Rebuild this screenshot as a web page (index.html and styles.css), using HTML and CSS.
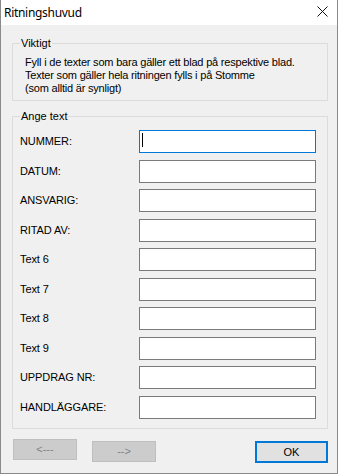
FILE: index.html
```html
<!DOCTYPE html>
<html lang="sv">
<head>
  <meta charset="UTF-8">
  <title>Ritningshuvud</title>
  <link rel="stylesheet" href="styles.css">
</head>
<body>

  <div class="window">
    <div class="titlebar">
      <span class="title">Ritningshuvud</span>
      <svg class="close-icon" width="11" height="11" viewBox="0 0 11 11">
        <path d="M0.5 0.5L10.5 10.5M10.5 0.5L0.5 10.5" stroke="#111" stroke-width="1"/>
      </svg>
    </div>

    <div class="dialog-body">
      <fieldset class="group-box">
        <legend>Viktigt</legend>
        <p class="info-text">
          Fyll i de texter som bara gäller ett blad på respektive blad.<br>
          Texter som gäller hela ritningen fylls i på Stomme<br>
          (som alltid är synligt)
        </p>
      </fieldset>

      <fieldset class="group-box fields-box">
        <legend>Ange text</legend>
        <div class="form-grid">
          <label for="nummer">NUMMER:</label>
          <div class="field-wrap">
            <input type="text" id="nummer" class="input-box focused">
            <span class="caret"></span>
          </div>

          <label for="datum">DATUM:</label>
          <input type="text" id="datum" class="input-box">

          <label for="ansvarig">ANSVARIG:</label>
          <input type="text" id="ansvarig" class="input-box">

          <label for="ritadav">RITAD AV:</label>
          <input type="text" id="ritadav" class="input-box">

          <label for="text6">Text 6</label>
          <input type="text" id="text6" class="input-box">

          <label for="text7">Text 7</label>
          <input type="text" id="text7" class="input-box">

          <label for="text8">Text 8</label>
          <input type="text" id="text8" class="input-box">

          <label for="text9">Text 9</label>
          <input type="text" id="text9" class="input-box">

          <label for="uppdrag">UPPDRAG NR:</label>
          <input type="text" id="uppdrag" class="input-box">

          <label for="handlaggare">HANDLÄGGARE:</label>
          <input type="text" id="handlaggare" class="input-box">
        </div>
      </fieldset>

      <div class="button-row">
        <button type="button" class="nav-btn prev-btn" disabled>&lt;---</button>
        <button type="button" class="nav-btn next-btn" disabled>--&gt;</button>
        <button type="button" class="ok-btn">OK</button>
      </div>
    </div>
  </div>

</body>
</html>
```

FILE: styles.css
```css
body {
  margin: 0;
  font-family: 'Liberation Sans', Arial, sans-serif;
  font-size: 11px;
  color: #000;
  background-color: #fff;
}

.window {
  width: 338px;
  height: 474px;
  box-sizing: border-box;
  border: 1px solid #8a8a8a;
  border-top: none;
  background-color: #f0f0f0;
  display: flex;
  flex-direction: column;
}

.titlebar {
  height: 25px;
  background-color: #fff;
  display: flex;
  align-items: center;
  justify-content: space-between;
  padding: 0 9px 0 3px;
}

.title {
  font-family: 'Noto Sans', sans-serif;
  font-size: 12px;
  letter-spacing: -0.3px;
  margin-top: -1px;
}

.close-icon {
  display: block;
  margin-top: -3px;
}

.dialog-body {
  padding: 12px 9px 0 11px;
}

.group-box {
  margin: 0;
  padding: 0;
  border: 1px solid #dcdcdc;
  min-width: 0;
}

.group-box legend {
  margin-left: 7px;
  padding: 0 1px;
  line-height: 13px;
}

.info-text {
  margin: 0;
  padding: 6px 0 5px 12px;
  line-height: 13px;
  letter-spacing: -0.2px;
}

.fields-box {
  margin-top: 9px;
}

.form-grid {
  display: grid;
  grid-template-columns: 119px 177px;
  row-gap: 6.5px;
  align-items: center;
  padding: 7px 0 9px 7px;
}

.form-grid label {
  line-height: 13px;
  letter-spacing: -0.1px;
}

.input-box {
  display: block;
  box-sizing: border-box;
  width: 177px;
  height: 23px;
  margin: 0;
  border: 1px solid #7a7a7a;
  background-color: #fff;
  outline: none;
  padding: 0 3px;
  font: inherit;
}

.input-box.focused {
  border-color: #0078d7;
}

.field-wrap {
  position: relative;
}

.caret {
  position: absolute;
  left: 3px;
  top: 3px;
  width: 1px;
  height: 14px;
  background-color: #000;
}

.button-row {
  display: flex;
  align-items: flex-start;
  margin-top: 10px;
  padding-left: 1px;
}

.nav-btn, .ok-btn {
  font: inherit;
  box-sizing: border-box;
  padding: 0;
  margin: 0;
  cursor: default;
}

.nav-btn {
  width: 64px;
  height: 21px;
  background-color: #cccccc;
  border: 1px solid #bfbfbf;
  color: #838383;
}

.next-btn {
  margin-left: 15px;
  margin-top: 2px;
}

.ok-btn {
  margin-left: auto;
  margin-top: 2px;
  width: 73px;
  height: 22px;
  background-color: #e1e1e1;
  border: 2px solid #0078d7;
  color: #000;
}
```
